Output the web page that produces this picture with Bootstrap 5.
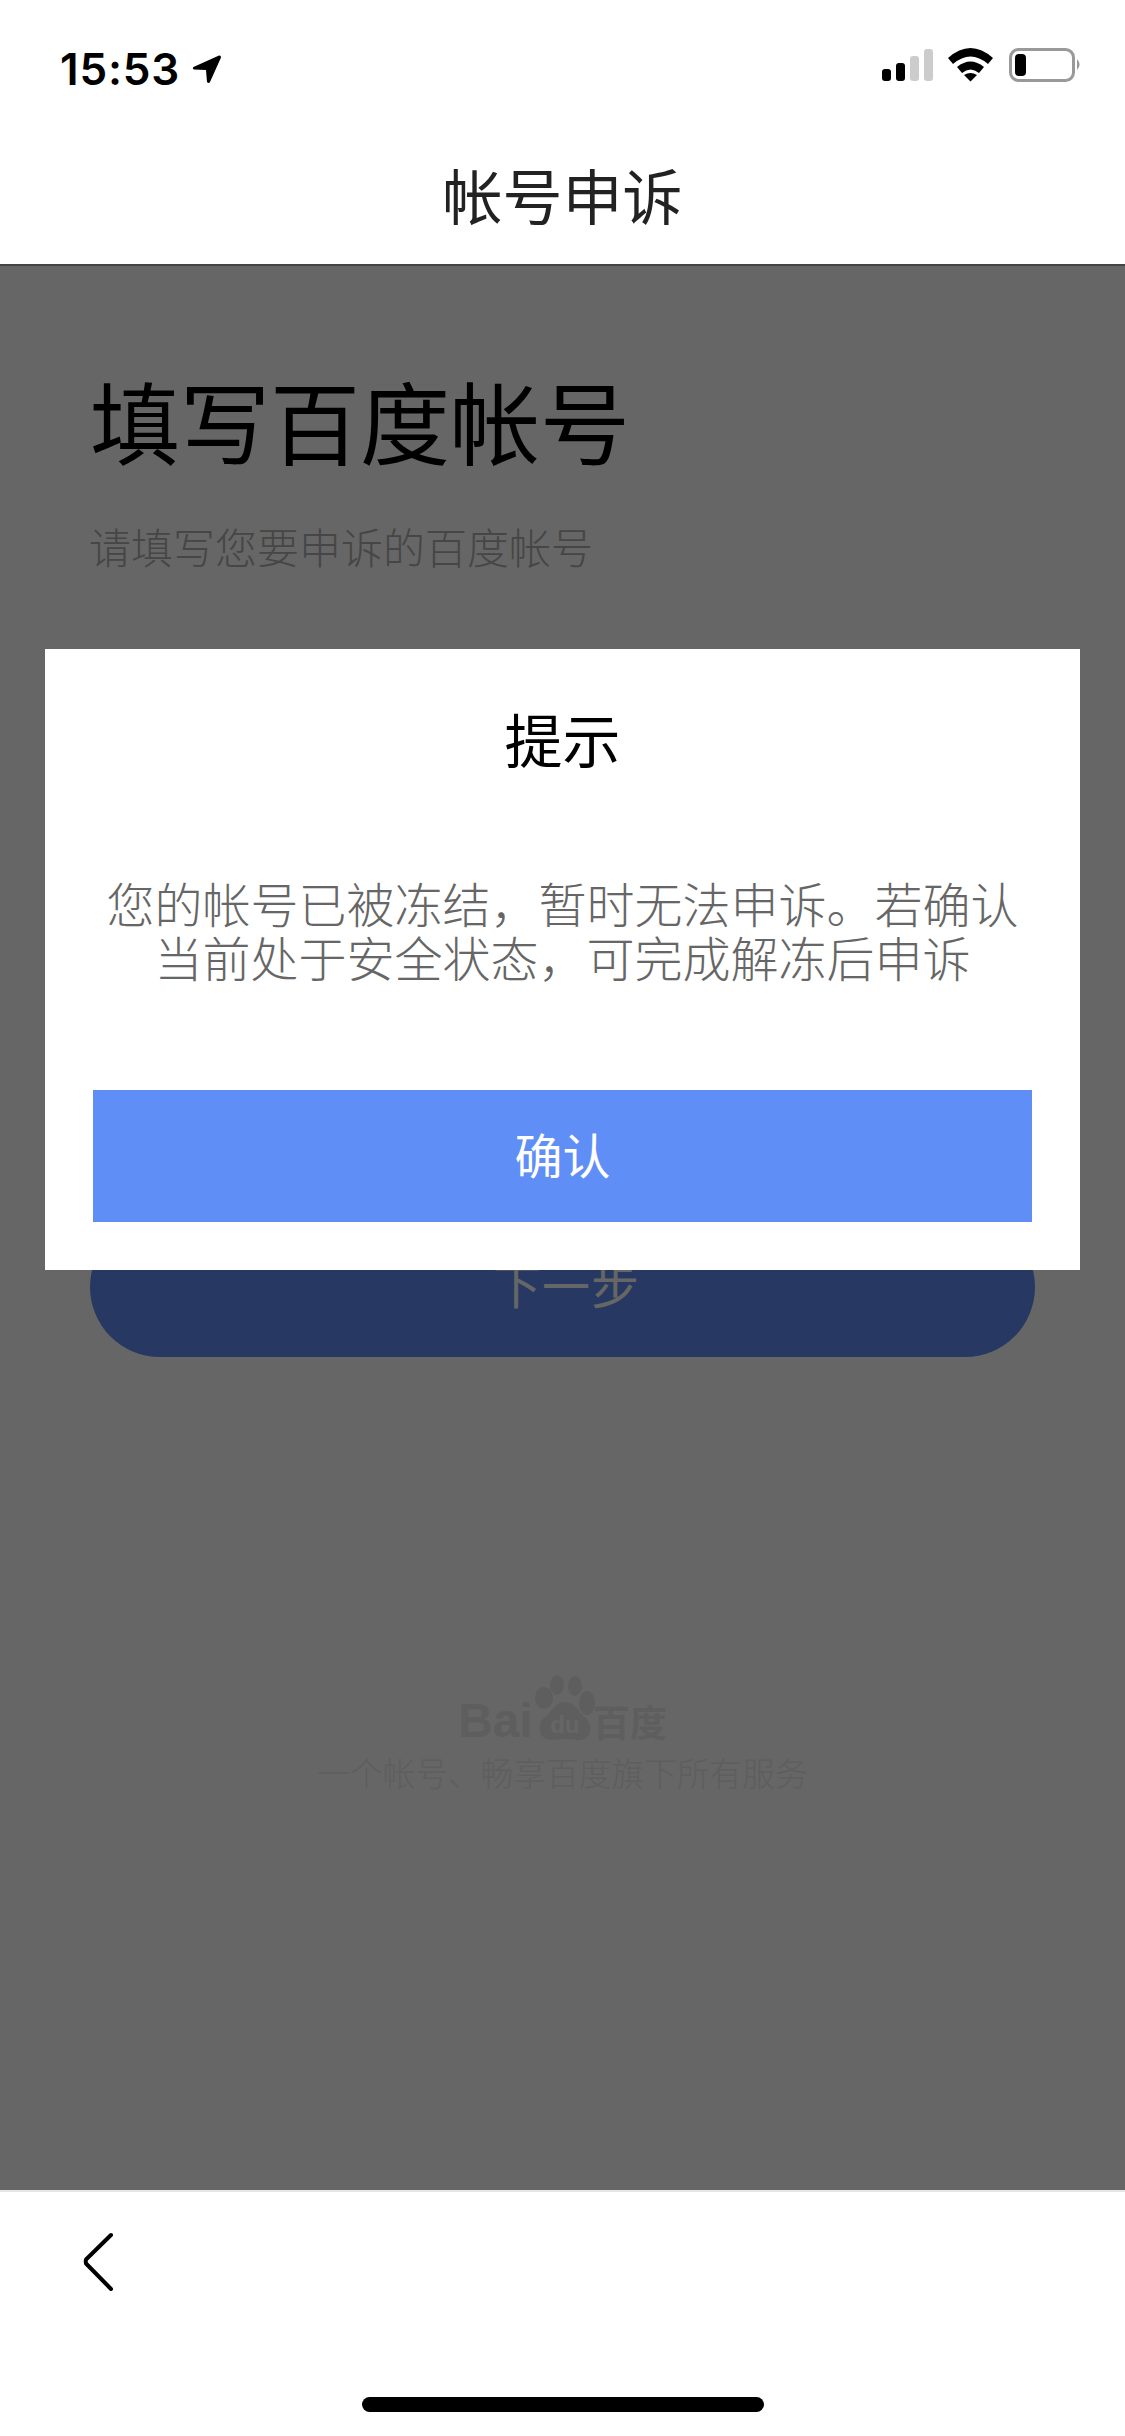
<!DOCTYPE html>
<html lang="zh-CN">

<head>
  <meta charset="UTF-8" />
  <meta name="viewport" content="width=device-width, initial-scale=1.0" />
  <title>帐号申诉</title>
  <link href="https://cdn.jsdelivr.net/npm/bootstrap@5.3.3/dist/css/bootstrap.min.css" rel="stylesheet" />
  <style>
    html, body {
      margin: 0;
      background: #fff;
    }

    body {
      width: 1125px;
      height: 2436px;
      overflow: hidden;
      font-family: "Noto Sans CJK SC", "Liberation Sans", sans-serif;
      font-weight: 300;
    }

    .status-bar {
      height: 100px;
      padding: 48px 43px 10px 60px;
    }

    .status-clock {
      gap: 12px;
    }

    .status-time {
      font-family: Inter, "Liberation Sans", sans-serif;
      font-size: 44px;
      font-weight: 600;
      line-height: 42px;
      letter-spacing: 0.8px;
      color: #000;
    }

    .title-bar {
      height: 164px;
      padding-top: 30px;
      font-size: 60px;
      font-weight: 400;
      line-height: 128px;
      color: #222;
    }

    .page-main {
      min-height: 0;
    }

    .page-flow {
      height: 100%;
      border-top: 2px solid #aaa;
      padding: 108px 90px 0;
    }

    .form-title {
      margin: 0;
      font-size: 90px;
      font-weight: 400;
      line-height: 90px;
      color: #000;
    }

    .form-hint {
      margin: 52px 0 0 -1px;
      font-size: 42px;
      font-weight: 300;
      line-height: 60px;
      color: #b0b0b0;
    }

    .next-btn {
      display: block;
      width: 945px;
      height: 140px;
      margin-top: 641px;
      padding: 0 0 8px 8px;
      border: 0;
      border-radius: 70px;
      background: #618ef5;
      color: #fff;
      font-size: 48px;
      letter-spacing: 1px;
      font-weight: 400;
    }

    .brand-box {
      margin-top: 318px;
      color: #ebebeb;
    }

    .brand-logo {
      height: 67px;
    }

    .brand-bai {
      font-family: "Liberation Sans", sans-serif;
      font-size: 48px;
      font-weight: 700;
      line-height: 36px;
      margin-bottom: 3px;
    }

    .brand-cn {
      font-size: 37px;
      font-weight: 700;
      line-height: 36px;
      margin-bottom: 3px;
      margin-left: -4px;
    }

    .brand-text {
      margin-top: 10px;
      font-size: 32.7px;
      line-height: 40px;
      text-align: center;
    }

    .mask-layer {
      position: absolute;
      inset: 0;
      background: rgba(0, 0, 0, 0.6);
    }

    .alert-box {
      position: absolute;
      left: 45px;
      top: 385px;
      width: 1035px;
      height: 621px;
      padding: 44px 48px 0;
      background: #fff;
      text-align: center;
    }

    .alert-title {
      margin: 0;
      font-size: 58px;
      font-weight: 400;
      line-height: 90px;
      color: #000;
    }

    .alert-text {
      margin: 92px -10px 0;
      font-size: 48px;
      line-height: 54px;
      color: #666;
    }

    .alert-btn {
      display: block;
      width: 939px;
      height: 132px;
      margin-top: 107px;
      padding: 0 0 6px;
      border: 0;
      border-radius: 0;
      background: #5f8ef7;
      color: #fff;
      font-size: 48px;
      font-weight: 400;
    }

    .alert-btn:hover, .alert-btn:focus {
      background: #5f8ef7;
      color: #fff;
    }

    .tool-bar {
      height: 246px;
      flex: none;
      border-top: 2px solid #e6e6e6;
      padding: 39px 0 24px;
    }

    .back-link {
      display: block;
      width: 40px;
      height: 60px;
      margin-left: 80px;
    }

    .home-bar {
      width: 402px;
      height: 15px;
      border-radius: 8px;
      background: #000;
    }
  </style>
</head>

<body class="d-flex flex-column">
  <!-- status bar -->
  <div class="status-bar d-flex justify-content-between align-items-start flex-shrink-0">
    <div class="status-clock d-flex align-items-center">
      <span class="status-time">15:53</span>
      <svg width="30" height="30" viewBox="0 0 30 30">
        <path d="M27 1.5 L1.5 13 Q0 14.5 2 15.5 L14 16 L15 28 Q16.5 30 18 28 L29 3.5 Q29 1 27 1.5 Z" fill="#000" />
      </svg>
    </div>
    <svg width="200" height="34" viewBox="882 52 200 34">
      <rect x="882" y="73" width="9" height="12" rx="3" fill="#000" />
      <rect x="896" y="67" width="9" height="18" rx="3" fill="#000" />
      <rect x="910" y="60" width="9" height="25" rx="3" fill="#ccc" />
      <rect x="924" y="53" width="9" height="32" rx="3" fill="#ccc" />
      <path d="M948 62 Q970.5 42 993 62 L988 68 Q970.5 53 953 68 Z" fill="#000" />
      <path d="M957 71 Q970.5 60 984 71 L979 77 Q970.5 70 962 77 Z" fill="#000" />
      <path d="M964 79 Q970.5 75 977 79 L970.5 85.5 Z" fill="#000" />
      <rect x="1010.5" y="53.5" width="63" height="31" rx="8" fill="none" stroke="#999" stroke-width="3" />
      <rect x="1015" y="58" width="11" height="22" rx="4" fill="#000" />
      <path d="M1077 63 Q1082 68.5 1077 74 Z" fill="#999" />
    </svg>
  </div>

  <!-- title -->
  <div class="title-bar text-center flex-shrink-0">帐号申诉</div>

  <!-- page under the mask -->
  <div class="page-main position-relative flex-grow-1">
    <div class="page-flow">
      <h1 class="form-title">填写百度帐号</h1>
      <p class="form-hint">请填写您要申诉的百度帐号</p>
      <button type="button" class="btn next-btn">下一步</button>

      <div class="brand-box">
        <div class="brand-logo d-flex justify-content-center align-items-end">
          <span class="brand-bai">Bai</span>
          <svg width="64" height="67" viewBox="0 0 64 67">
            <ellipse cx="11" cy="23" rx="9" ry="11" fill="#ebebeb" />
            <ellipse cx="24" cy="10" rx="7" ry="10" fill="#ebebeb" />
            <ellipse cx="42" cy="11" rx="7" ry="10" fill="#ebebeb" />
            <ellipse cx="54" cy="28" rx="8" ry="12" fill="#ebebeb" />
            <path d="M32 27 C22 27 20 36 12 42 C2 50 6 66 20 65 C26 64 38 64 44 65 C58 66 62 52 52 42 C45 36 42 27 32 27 Z" fill="#ebebeb" />
            <text x="32" y="58" text-anchor="middle" font-family="Liberation Sans" font-size="24" font-weight="700" fill="#ffffff">du</text>
          </svg>
          <span class="brand-cn">百度</span>
        </div>
        <div class="brand-text">一个帐号、畅享百度旗下所有服务</div>
      </div>
    </div>

    <div class="mask-layer"></div>

    <!-- alert -->
    <div class="alert-box">
      <h2 class="alert-title">提示</h2>
      <p class="alert-text">您的帐号已被冻结，暂时无法申诉。若确认<br>当前处于安全状态，可完成解冻后申诉</p>
      <button type="button" class="btn alert-btn">确认</button>
    </div>
  </div>

  <!-- bottom bar -->
  <div class="tool-bar d-flex flex-column justify-content-between">
    <a class="back-link" href="#" aria-label="返回">
      <svg width="40" height="60" viewBox="0 0 40 60">
        <path d="M31 4 L6 28.5 Q5.5 30.5 6 32.5 L31 58" fill="none" stroke="#000" stroke-width="4" stroke-linecap="round" stroke-linejoin="round" />
      </svg>
    </a>
    <div class="home-bar mx-auto"></div>
  </div>
</body>

</html>
